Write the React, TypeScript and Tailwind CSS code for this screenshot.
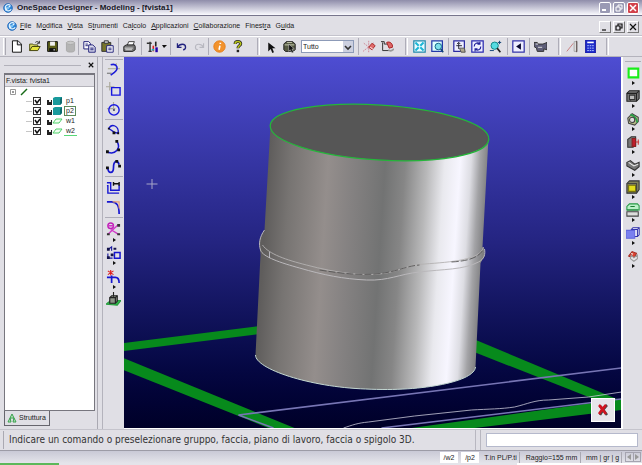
import { ReactNode, useState } from "react";

type IconProps = { children: ReactNode; size?: string };

function Icon({ children, size = "w-4 h-4" }: IconProps) {
	return (
		<svg viewBox="0 0 16 16" className={`${size} shrink-0`} fill="none" stroke="#111" strokeWidth="1.2" aria-hidden="true">
			{children}
		</svg>
	);
}

/* --Icon drawings-- */
const icons = {
	logo: (
		<>
			<circle cx="8" cy="8" r="7" fill="#2f86d8" stroke="#1c62b4" />
			<path d="M12 4a5 5 0 1 0 1 6M4 12 12 4M3 8h6" stroke="#e4f4ff" strokeWidth="1.8" />
			<circle cx="8" cy="8" r="2" fill="#7cc4f4" stroke="none" />
		</>
	),
	newFile: <path d="M3 1h7l4 4v10H3zM9 1v5h5" fill="#fff" />,
	open: (
		<>
			<path d="M2 13V5h4l1 1h5v2" fill="#d8d860" stroke="#55551a" />
			<path d="M2 13l3-5h10l-3 5z" fill="#e6e43c" stroke="#44440c" />
			<path d="M9 3c2-2 4-1 5 1M14 1v3h-3" stroke="#333" />
		</>
	),
	save: (
		<>
			<path d="M2 2h12v12H2z" fill="#5c5f18" stroke="#111" />
			<path d="M5 2h6v5H5z" fill="#f0f0f0" stroke="none" />
			<path d="M4 10h8v4H4z" fill="#111" stroke="none" />
			<path d="M10 11v2" stroke="#fff" />
		</>
	),
	database: (
		<>
			<path d="M3 3v10c0 2.500 10 2.500 10 0V3" fill="#b4b4b4" stroke="#aaa" />
			<ellipse cx="8" cy="3.500" rx="5" ry="2" fill="#c9c9c9" stroke="#aaa" />
		</>
	),
	copy: (
		<>
			<path d="M1 2h6l2 2v7H1z" fill="#fff" stroke="#22227a" />
			<path d="M7 6h5l3 3v6H7z" fill="#dde" stroke="#22227a" />
			<path d="M3 5h3M3 7h3M9 10h4M9 12h4" stroke="#22227a" />
		</>
	),
	paste: (
		<>
			<path d="M1 3h11v11H1z" fill="#77752a" stroke="#333" />
			<path d="M4 1h5v3H4z" fill="#ddd" stroke="#333" />
			<path d="M7 7h8v8H7z" fill="#fff" stroke="#22227a" />
			<path d="M9 10h4M9 12h4" stroke="#22227a" />
		</>
	),
	print: (
		<>
			<path d="M5 7l2-5h7l-2 5" fill="#fff" stroke="#444" />
			<path d="M1 8l3-2h10l1 2v4l-3 2H1z" fill="#777" stroke="#222" />
			<path d="M2 10h10M3 12h8" stroke="#ddd" />
		</>
	),
	customize: (
		<>
			<path d="M1 4h6M5 2v12M3 14h4" stroke="#333" strokeWidth="1.800" />
			<path d="M9 7v7" stroke="#d22" strokeWidth="2" />
			<path d="M12 2v6" stroke="#222" strokeWidth="2" />
			<path d="M13 9v6" stroke="#20a" strokeWidth="3" />
			<path d="M7 12h3" stroke="#1bb" strokeWidth="2" />
		</>
	),
	undo: <path d="M3 4v5h5M3 9c3-5 10-5 10 0 0 2-1 3-3 3" stroke="#23237f" strokeWidth="1.600" />,
	redo: <path d="M13 4v5H8M13 9C10 4 3 4 3 9c0 2 1 3 3 3" stroke="#b8b8c0" strokeWidth="1.400" />,
	info: (
		<>
			<circle cx="8" cy="8" r="7" fill="#f2922c" stroke="#e57f1c" />
			<path d="M8.500 7l-1 5M9 3.500v1.500" stroke="#fff" strokeWidth="2" />
		</>
	),
	help: (
		<>
			<path d="M5 5c0-4 7-4 7-.5C12 7 8.500 7 8.500 10" stroke="#222" strokeWidth="3.600" />
			<path d="M5 5c0-4 7-4 7-.5C12 7 8.500 7 8.500 10" stroke="#b8c418" strokeWidth="1.800" />
			<path d="M8.500 12v3" stroke="#222" strokeWidth="3" />
		</>
	),
	cursor: <path d="M4 3v11l3-3 2 5 2-1-2-5h4z" fill="#111" stroke="none" />,
	pickBox: (
		<>
			<path d="M1 5l3-3h8l3 3v7l-3 2H3l-2-2z" fill="#565a42" stroke="#222" />
			<path d="M2 6h12M5 3h6" stroke="#c8ccb0" />
			<path d="M7 5v9l2-2 2 4 2-1-2-4h3z" fill="#111" stroke="#fff" strokeWidth=".5" />
		</>
	),
	snap: (
		<>
			<path d="M0 14 14 3M7 1v14M1 4l12 9" stroke="#d08a98" strokeDasharray="2 1" />
			<path d="M7 9l4-5 4 3-4 5z" fill="#e26a6a" stroke="#a33" />
			<path d="M9 9l3 2" stroke="#fff" />
		</>
	),
	snapFace: (
		<>
			<path d="M0 2h4v3h4M2 3v10h8" stroke="#333" />
			<path d="M7 3c4-2 8 2 7 6l-4 1z" fill="#d66" stroke="#a22" />
			<path d="M9 12c2 2 5 1 7-1" stroke="#999" strokeWidth="2" />
		</>
	),
	fit: (
		<>
			<path d="M1 1h14v14H1z" fill="#e8fbff" stroke="#28a" strokeWidth="1.500" />
			<path d="M3 3l4 4M13 3 9 7M3 13l4-4M13 13 9 9" stroke="#1bb6d6" strokeWidth="2.400" />
		</>
	),
	zoomWindow: (
		<>
			<path d="M1 1h13v13H1z" fill="#dff" stroke="#2338a8" strokeWidth="1.500" />
			<circle cx="9" cy="8" r="4" fill="#7fe0ea" stroke="#168" />
			<path d="M12 11l3 4" stroke="#147" strokeWidth="2" />
		</>
	),
	pan: (
		<>
			<path d="M1 1h13v13H1z" fill="#eef" stroke="#2a2aa0" strokeWidth="1.500" />
			<path d="M7 3v8M4 7h7M5 5l2-2 2 2" stroke="#223" />
			<path d="M8 10h6l1 5h-5z" fill="#b0a890" stroke="#555" />
		</>
	),
	rotate: (
		<>
			<path d="M1 1h14v14H1z" fill="#eef" stroke="#2a2ab0" strokeWidth="1.500" />
			<path d="M4 8a4 4 0 0 1 7-3M12 8a4 4 0 0 1-7 3M11 2v3H8M5 14v-3h3" stroke="#23239a" strokeWidth="1.400" />
		</>
	),
	zoom: (
		<>
			<circle cx="7" cy="7" r="4.500" fill="#55dbe2" stroke="#188" />
			<path d="M10 10l4 5" stroke="#222" strokeWidth="2" />
			<path d="M13 1v4M11 3h4M1 13h5" stroke="#147" />
		</>
	),
	back: (
		<>
			<path d="M1 1h14v14H1z" fill="#eef" stroke="#3434a8" strokeWidth="1.500" />
			<path d="M11 4v8L5 8z" fill="#0a0a30" stroke="none" />
		</>
	),
	camera: (
		<>
			<path d="M0 3h4l1 2h6l5-2v9l-4-1v3H4l-1-4-3-2z" fill="#5d5d78" stroke="#333" />
			<path d="M2 5h3M5 9h5" stroke="#ddd" />
		</>
	),
	measure: (
		<>
			<path d="M1 14 9 4" stroke="#c98080" />
			<path d="M10 2h4v12h-4z" fill="#ddd" stroke="#aaa" />
			<path d="M13 1v14" stroke="#655" />
		</>
	),
	calculator: (
		<>
			<path d="M2 0h12v16H2z" fill="#1d2ccc" stroke="#1818a0" />
			<path d="M4 3h8" stroke="#fff" strokeWidth="2" />
			<path d="M4 7h8M4 10h8M4 13h8" stroke="#b8c8ff" strokeDasharray="2 1" />
		</>
	),
	/* --Drafting icons-- */
	tangent: (
		<>
			<path d="M2 7h8M11 1v6M9 7h6" stroke="#b5b5a4" />
			<path d="M5 3c7-2 9 4 4 8l-4 3" stroke="#1a1ad8" strokeWidth="1.600" />
			<path d="M1 12h5" stroke="#777" />
		</>
	),
	rectangle: (
		<>
			<path d="M4 0v9M0 5h9" stroke="#aaa99a" />
			<path d="M6 6h9v8H6z" stroke="#1616e0" strokeWidth="1.500" />
		</>
	),
	circle: (
		<>
			<path d="M8 0v9M1 7h9" stroke="#aaa99a" />
			<circle cx="8.500" cy="8.500" r="5.500" stroke="#1616e0" strokeWidth="1.500" />
			<circle cx="8.500" cy="8.500" r="1" fill="#336" stroke="none" />
		</>
	),
	arcCenter: (
		<>
			<path d="M3 7c3-6 11-3 10 5M3 7l6 4 4 1" stroke="#1616d0" strokeWidth="1.400" />
			<path d="M2 6h2v2H2zM7 10h3v3H7zM12 11h2v2h-2z" fill="#111" stroke="none" />
		</>
	),
	arc: (
		<>
			<path d="M12 2c4 7-2 14-10 11" stroke="#1616d0" strokeWidth="1.600" />
			<path d="M10 0h3v3h-3zM0 11h3v3H0zM12 9h3v3h-3z" fill="#111" stroke="none" />
		</>
	),
	spline: (
		<>
			<path d="M2 9c0 7 6 7 6 0s4-9 6-3" stroke="#1616d0" strokeWidth="1.800" />
			<path d="M0 8h3v3H0zM10 1h3v3h-3zM13 6h3v3h-3z" fill="#111" stroke="none" />
		</>
	),
	offset: (
		<>
			<path d="M1 3h4v8h9V5M1 6h1v8h12" stroke="#1616d0" strokeWidth="1.500" />
			<path d="M8 2v4M8 4h6M14 2v4" stroke="#111" strokeWidth="1.500" />
		</>
	),
	fillet: (
		<>
			<path d="M1 2h5c6 0 8 4 8 13" stroke="#1616d0" strokeWidth="1.800" />
			<path d="M7 2h7v7" stroke="#e8a070" />
		</>
	),
	trim: (
		<>
			<circle cx="5" cy="4" r="3" stroke="#c020b8" strokeWidth="1.500" />
			<path d="M2 13 13 3M5 8l8 5M2 4h6" stroke="#d038c8" strokeWidth="1.500" />
			<path d="M12 2h3v3h-3zM12 12h3v2h-3zM1 12h3v2H1z" fill="#333" stroke="none" />
		</>
	),
	move: (
		<>
			<path d="M2 5l4-3v4M2 9v5h5" stroke="#1616a0" />
			<path d="M9 8h6v6H9z" stroke="#1616d0" strokeWidth="1.600" />
			<path d="M1 3h3v3H1zM5 9h3v3H5zM1 12h3v3H1zM8 3h3v2H8z" fill="#14144a" stroke="none" />
		</>
	),
	split: (
		<>
			<path d="M2 2l6 4M8 2 2 6M5 1v6" stroke="#e02020" />
			<path d="M1 9h9c3 0 4 2 4 6M6 7v8" stroke="#1616d0" strokeWidth="1.800" />
		</>
	),
	plane: (
		<>
			<path d="M0 13l5-4h11l-4 5z" fill="#2db84a" stroke="#2a9c40" />
			<path d="M4 6l2-2h6v6l-2 2H4z" fill="#8d9488" stroke="#222" />
			<path d="M4 6h6v6M10 6l2-2M8 0v5" stroke="#222" />
		</>
	),
	/* --Solid icons-- */
	workplane: <path d="M3 3h11v10H3z" fill="#fff" stroke="#18ee18" strokeWidth="2.400" />,
	extrude: (
		<>
			<path d="M1 5l3-3h11v9l-3 3H1z" fill="#777" stroke="#222" />
			<path d="M1 5h11v9M12 5l3-3M5 13V8h4" stroke="#222" />
			<path d="M4 7h6v5H4z" fill="#bbb" stroke="#333" />
		</>
	),
	revolve: (
		<>
			<path d="M2 7l5-5 7 4v5l-4 4-7-2z" fill="#b8bc88" stroke="#444" />
			<path d="M5 3c4 1 7 4 8 9" stroke="#28a048" strokeWidth="2" />
			<circle cx="7" cy="9" r="3" fill="#ddd" stroke="#444" />
		</>
	),
	section: (
		<>
			<path d="M2 5l4-3h5v10l-3 2H2z" fill="#777" stroke="#333" />
			<path d="M7 4h4v9H7z" fill="#c01c2c" stroke="#822" />
			<path d="M11 8h4M14 5v6" stroke="#c33" />
		</>
	),
	sweep: (
		<>
			<path d="M1 5l4-2 5 4 5-2v5l-5 4-9-5z" fill="#777" stroke="#333" />
			<path d="M3 5l6 4 5-2" stroke="#eee" />
		</>
	),
	pocket: (
		<>
			<path d="M1 4l3-3h11v10l-3 4H1z" fill="#83835c" stroke="#333" />
			<path d="M3 6h8v7H3z" fill="#e2dc1c" stroke="#77720c" />
			<path d="M1 4h11v11" stroke="#444" />
		</>
	),
	table: (
		<>
			<path d="M1 8V4l3-3h9l2 2v5z" fill="#baf0c8" stroke="#259a44" />
			<path d="M1 10h13v5H1z" fill="#ddd" stroke="#444" />
			<path d="M1 8h13M5 4h5" stroke="#1c7c34" />
		</>
	),
	shell: (
		<>
			<path d="M6 4l2-2h7v8l-2 2H6z" fill="#fff" stroke="#2b2ba8" />
			<path d="M6 4h7v8M13 4l2-2" stroke="#2b2ba8" />
			<path d="M0 5h10v9H0z" fill="#7a80f0" stroke="#6065dc" />
		</>
	),
	modify: (
		<>
			<path d="M3 8l4-5 5 2-3 6z" fill="#dc4330" stroke="#a22c22" />
			<path d="M6 7l3 3 4-3v4l-4 3-4-3z" fill="#e8e8e8" stroke="#999" />
			<path d="M6 5l2 1" stroke="#fff" />
		</>
	),
};

type IconName = keyof typeof icons;

type ToolGroupType = { width: string; tools: { name: IconName; label: string; menu?: boolean }[]; select?: boolean; last?: boolean };

const toolGroups: ToolGroupType[] = [
	{
		width: "w-[73px]",
		tools: [
			{ name: "newFile", label: "Nuovo" },
			{ name: "open", label: "Apri" },
			{ name: "save", label: "Salva" },
			{ name: "database", label: "Database" },
		],
	},
	{
		width: "w-[40px]",
		tools: [
			{ name: "copy", label: "Copia" },
			{ name: "paste", label: "Incolla" },
		],
	},
	{ width: "w-[23px]", tools: [{ name: "print", label: "Stampa" }] },
	{ width: "w-[29px]", tools: [{ name: "customize", label: "Personalizza", menu: true }] },
	{
		width: "w-[38px]",
		tools: [
			{ name: "undo", label: "Annulla" },
			{ name: "redo", label: "Ripeti" },
		],
	},
	{
		width: "w-[49px]",
		last: true,
		tools: [
			{ name: "info", label: "Informazioni" },
			{ name: "help", label: "Aiuto" },
		],
	},
	{
		width: "w-[98px]",
		select: true,
		tools: [
			{ name: "cursor", label: "Seleziona" },
			{ name: "pickBox", label: "Seleziona in 3D" },
		],
	},
	{
		width: "w-[47px]",
		last: true,
		tools: [
			{ name: "snap", label: "Aggancia" },
			{ name: "snapFace", label: "Aggancia faccia" },
		],
	},
	{
		width: "w-[40px]",
		tools: [
			{ name: "fit", label: "Adatta" },
			{ name: "zoomWindow", label: "Zoom finestra" },
		],
	},
	{
		width: "w-[59px]",
		tools: [
			{ name: "pan", label: "Sposta vista" },
			{ name: "rotate", label: "Ruota vista" },
			{ name: "zoom", label: "Zoom" },
		],
	},
	{ width: "w-[22px]", tools: [{ name: "back", label: "Vista precedente" }] },
	{ width: "w-[29px]", last: true, tools: [{ name: "camera", label: "Camera" }] },
	{
		width: "w-[45px]",
		last: true,
		tools: [
			{ name: "measure", label: "Misura" },
			{ name: "calculator", label: "Calcolatrice" },
		],
	},
];

const menus = [
	["", "F", "ile"],
	["M", "o", "difica"],
	["", "V", "ista"],
	["S", "t", "rumenti"],
	["Ca", "l", "colo"],
	["", "A", "pplicazioni"],
	["", "C", "ollaborazione"],
	["Finest", "r", "a"],
	["G", "u", "ida"],
];

const draftTools: { height: string; names: IconName[] }[] = [
	{ height: "h-[60px]", names: ["tangent", "rectangle", "circle"] },
	{ height: "h-[57px]", names: ["arcCenter", "arc", "spline"] },
	{ height: "h-[41px]", names: ["offset", "fillet"] },
];
const editTools: IconName[] = ["trim", "move", "split", "plane"];
const solidTools: IconName[] = ["workplane", "extrude", "revolve", "section", "sweep", "pocket", "table", "shell", "modify"];

const parts = [
	{ name: "p1", solid: true },
	{ name: "p2", solid: true },
	{ name: "w1", solid: false },
	{ name: "w2", solid: false },
];

function TitleBar() {
	return (
		<header className="flex h-4 shrink-0 items-center border-b border-[#77758c] bg-linear-to-b from-[#8f8daa] via-[#c4c3d4] to-[#fbfbff] pl-[3px] pr-[3px]">
			<Icon size="w-[10px] h-[10px]">{icons.logo}</Icon>
			<h1 className="ml-1 flex-1 whitespace-nowrap text-[8px] font-bold text-[#15151f]">OneSpace Designer - Modeling - [fvista1]</h1>
			<div className="flex gap-[2px]">
				<button aria-label="Riduci" className="flex h-3 w-3 items-end rounded-xs border border-white bg-[#9a9ab4] p-[2px]">
					<span className="h-[2px] w-1 bg-white"></span>
				</button>
				<button aria-label="Ripristina" className="flex h-3 w-3 items-center justify-center rounded-xs border border-white bg-[#9a9ab4]">
					<svg viewBox="0 0 8 8" className="h-2 w-2" fill="none" stroke="#fff">
						<path d="M3 3V1h4v4H5M1 3h4v4H1z" />
					</svg>
				</button>
				<button aria-label="Chiudi" className="flex h-3 w-3 items-center justify-center rounded-xs border border-white bg-[#d2414b]">
					<svg viewBox="0 0 8 8" className="h-2 w-2" stroke="#fff" strokeWidth="1.500">
						<path d="M1 1l6 6M7 1 1 7" />
					</svg>
				</button>
			</div>
		</header>
	);
}

function MenuBar() {
	const mdi = [
		{ label: "Riduci vista", d: "M1 7h4" },
		{ label: "Ripristina vista", d: "M3 3V1h4v4H5M1 3h4v4H1z" },
		{ label: "Chiudi vista", d: "M1 1l6 6M7 1 1 7" },
	];
	return (
		<nav className="flex h-5 shrink-0 items-center border-b border-[#c4c3cc] pl-[7px] pr-[3px]">
			<Icon size="w-[10px] h-[10px]">{icons.logo}</Icon>
			<div className="ml-[3px] flex flex-1 gap-[5px] whitespace-nowrap">
				{menus.map(([before, key, after]) => (
					<button key={before + key + after}>
						{before}
						<u>{key}</u>
						{after}
					</button>
				))}
			</div>
			<div className="flex gap-[2px] pt-[2px]">
				{mdi.map(({ label, d }) => (
					<button key={label} aria-label={label} className="flex h-3 w-3 items-center justify-center border border-t-white border-r-[#777] border-b-[#777] border-l-white">
						<svg viewBox="0 0 8 8" className="h-2 w-2" fill="none" stroke="#111" strokeWidth="1.200">
							<path d={d} />
						</svg>
					</button>
				))}
			</div>
		</nav>
	);
}

function FilterSelect() {
	return (
		<div className="relative h-[13px] w-[53px]">
			<select aria-label="Filtro di selezione" className="block h-full w-full appearance-none border border-[#8d9bb8] bg-white pl-px">
				<option>Tutto</option>
			</select>
			<span className="pointer-events-none absolute top-px right-px flex h-[11px] w-[10px] items-center justify-center bg-[#ccd0e0]">
				<svg viewBox="0 0 8 8" className="h-2 w-2" fill="none" stroke="#333" strokeWidth="1.600">
					<path d="M1 3l3 3 3-3" />
				</svg>
			</span>
		</div>
	);
}

function ToolBar() {
	return (
		<div role="toolbar" className="flex h-[21px] shrink-0 items-center border-t border-t-white border-b border-b-[#b4b3bc] pl-[3px]">
			<div className="h-[17px] w-[3px] border-x border-l-white border-r-[#aaa9b2]"></div>
			{toolGroups.map(({ width, tools, select, last }) => (
				<div key={tools[0].name} className="flex items-center">
					<div className={`${width} flex h-[17px] items-center gap-[5px] border-r border-[#aeadb8] pl-1`}>
						{tools.map(({ name, label, menu }) => (
							<button key={name} aria-label={label} className="flex items-center">
								<Icon size="w-[13px] h-[13px]">{icons[name]}</Icon>
								{menu && <Arrow />}
							</button>
						))}
						{select && <FilterSelect />}
					</div>
					{last && <div className="mx-px h-[17px] w-px bg-white"></div>}
				</div>
			))}
		</div>
	);
}

function Arrow() {
	return (
		<svg viewBox="0 0 6 4" className="ml-[2px] h-1 w-[6px]">
			<path d="M1 0h5L3 3z" fill="#111" />
		</svg>
	);
}

function Dot() {
	return (
		<svg viewBox="0 0 4 4" className="mt-px h-1 w-1">
			<path d="M1 0v4l3-2z" fill="#111" />
		</svg>
	);
}

function PartRow({ name, solid }: { name: string; solid: boolean }) {
	const [visible, setVisible] = useState(true);
	return (
		<li className="flex h-[10px] items-center pl-5">
			<span className="mr-px h-px w-[6px] bg-[#c6c6c6]"></span>
			<span className="relative h-2 w-2">
				<input id={name} type="checkbox" checked={visible} onChange={e => setVisible(e.target.checked)} className="peer absolute inset-0 appearance-none border border-[#333] bg-white" />
				<svg viewBox="0 0 8 8" className="pointer-events-none invisible absolute inset-0 h-2 w-2 peer-checked:visible" fill="none" stroke="#111" strokeWidth="1.500">
					<path d="M2 3l2 3 3-4" />
				</svg>
			</span>
			<svg viewBox="0 0 18 10" className="ml-[5px] h-[10px] w-[18px] shrink-0">
				<path d="M1 4h5v5H1z" fill="#222" />
				<path d="M3 4h2v2H3z" fill="#eee" />
				{solid ? (
					<>
						<path d="M7 2l2-1h7v6l-2 2H7z" fill="#199a9c" />
						<path d="M14 3v6l2-2V1z" fill="#0d6c70" />
					</>
				) : (
					<path d="M7 7l3-4h6l-3 4z" fill="#effff0" stroke="#4fd06a" />
				)}
			</svg>
			<label htmlFor={name} className={name === "p2" ? "h-[10px] border border-[#5c8a5c] px-px leading-[8px]" : name === "w2" ? "border-b border-[#58d878] px-[2px] leading-[9px]" : "px-[2px]"}>
				{name}
			</label>
		</li>
	);
}

function StructurePanel() {
	return (
		<aside className="flex w-[98px] shrink-0 flex-col border-r border-[#aaa9b2] pl-1 pr-[2px]">
			<div className="flex h-4 items-center gap-[7px]">
				<div className="h-px flex-1 bg-[#b2b1ba]"></div>
				<button aria-label="Chiudi pannello">
					<svg viewBox="0 0 8 8" className="mr-px h-[6px] w-[6px]" stroke="#111" strokeWidth="1.500">
						<path d="M1 1l6 6M7 1 1 7" />
					</svg>
				</button>
			</div>
			<div className="flex flex-1 flex-col border border-t-2 border-[#77767e] bg-white">
				<div className="h-3 border-b border-[#b4b3ba] bg-[#e0dfe5] pl-px leading-3">F.vista: fvista1</div>
				<div className="mt-px flex h-2 items-center pl-[5px]">
					<svg viewBox="0 0 20 8" className="h-2 w-5" fill="none">
						<path d="M.5 1.500h5v5h-5z" stroke="#999" />
						<path d="M2 4h2" stroke="#333" />
						<path d="M11 7l6-6" stroke="#176a17" strokeWidth="1.400" />
					</svg>
				</div>
				<ul className="ml-px flex flex-col">
					{parts.map(part => (
						<PartRow key={part.name} {...part} />
					))}
				</ul>
			</div>
			<button className="mb-[3px] flex h-[15px] w-[46px] items-center gap-[2px] border border-t-0 border-[#66656d] pl-[2px]">
				<svg viewBox="0 0 10 10" className="h-[10px] w-[10px]" fill="#bfe8c4" stroke="#38a04c">
					<path d="M5 1 3 5h4zM3 5 1 9h3zM7 5 6 9h3z" />
				</svg>
				Struttura
			</button>
		</aside>
	);
}

function DraftBar() {
	return (
		<div role="toolbar" className="ml-1 flex w-[22px] shrink-0 flex-col items-center border-l border-[#b4b3bc] pt-[2px]">
			{draftTools.map(({ height, names }) => (
				<div key={names[0]} className={`${height} flex w-[18px] flex-col items-center justify-around border-t border-[#aeadb8]`}>
					{names.map(name => (
						<button key={name} aria-label={name}>
							<Icon size="w-[15px] h-[15px]">{icons[name]}</Icon>
						</button>
					))}
				</div>
			))}
			<div className="flex h-[90px] w-[18px] flex-col items-center justify-between border-t border-[#aeadb8] pt-1">
				{editTools.map(name => (
					<button key={name} aria-label={name} className="flex flex-col items-center">
						<Icon size="w-[15px] h-[15px]">{icons[name]}</Icon>
						{name !== "plane" && <Dot />}
					</button>
				))}
			</div>
		</div>
	);
}

function Scene() {
	return (
		<svg viewBox="124 57 498 371" preserveAspectRatio="xMidYMid slice" className="absolute inset-0 h-full w-full" fill="none">
			<defs>
				<linearGradient id="steel" gradientUnits="userSpaceOnUse" x1="258" y1="340" x2="477" y2="354">
					<stop offset="0" stopColor="#5f5d5c" />
					<stop offset=".1" stopColor="#777472" />
					<stop offset=".27" stopColor="#948e8c" />
					<stop offset=".38" stopColor="#858282" />
					<stop offset=".53" stopColor="#727373" />
					<stop offset=".62" stopColor="#868686" />
					<stop offset=".72" stopColor="#b8b8b9" />
					<stop offset=".8" stopColor="#e9e9ee" />
					<stop offset=".87" stopColor="#f7f6ff" />
					<stop offset=".92" stopColor="#dddde3" />
					<stop offset=".96" stopColor="#a3a3a6" />
					<stop offset="1" stopColor="#7e7e80" />
				</linearGradient>
			</defs>
			{/* ground frame */}
			<g fill="#078a1c">
				<path d="M124 343l136-17v8l-136 17z" />
				<path d="M124 358l171 70h-26l-145-58z" />
				<path d="M474 339l148 62v9l-150-59z" />
				<path d="M412 428l210-29v11l-147 18z" />
			</g>
			<path d="M274 428l-35-13 383-47M382 428l240-29" stroke="#7775b4" strokeWidth="1.600" />
			<path d="M344 428c9-3 14-5 25-6l46-6 57-6c17-1 30-1 43-3 13-3 20-7 34-7l40-3 33-5" stroke="#c8c8d8" strokeWidth=".8" />
			{/* can body */}
			<path d="M271 126l-6 104c-3 5-5 9-5 13l1 12-5 100c0 14 54 32 110 34 60 3 109-8 110-22l5-104 4-7 0-7-2-2 6-109z" fill="url(#steel)" />
			<path d="M256 355c0 14 54 32 110 34 60 3 109-8 110-22" stroke="#c4d8d2" />
			<ellipse cx="380" cy="132.500" rx="109.500" ry="27.500" transform="rotate(3.6 380 132.500)" fill="#565656" stroke="#24b63a" strokeWidth="1.300" />
			{/* seam */}
			<path d="M265 230c-5 7-6 14-4 20 2 7 21 13 39 18 24 7 44 11 67 12 22 1 33-6 53-8 24-3 44-2 59-10 6-3 7-8 6-13" stroke="#bab8bb" />
			<path d="M263 245c6 9 24 15 44 20 30 8 60 12 80 8 18-4 22-8 38-9 27-2 56-4 59-17" stroke="#b3b1b1" strokeWidth=".9" />
			<path d="M320 270c25 4 48 6 65 3s22-7 35-8M452 262c18-1 28-5 32-13" stroke="#4d4b4b" strokeWidth=".8" strokeDasharray="7 2" />
			<path d="M270 252v6" stroke="#c8c8d0" strokeWidth=".8" />
			{/* cursor */}
			<path d="M147 184h11M152.500 179v10" stroke="#a7a6c8" />
		</svg>
	);
}

function SolidBar() {
	return (
		<div role="toolbar" className="flex w-5 shrink-0 flex-col items-center border-l border-white pt-1">
			<div className="mb-1 h-px w-4 bg-[#b0afb8]"></div>
			<div className="flex h-[202px] flex-col items-center justify-between">
				{solidTools.map(name => (
					<button key={name} aria-label={name} className="flex flex-col items-center">
						<Icon size="w-[14px] h-[14px]">{icons[name]}</Icon>
						<Dot />
					</button>
				))}
			</div>
		</div>
	);
}

function CommandBar() {
	return (
		<div className="flex h-[22px] shrink-0 items-center border-y border-t-[#c5c4cc] border-b-[#9c9ba6] pr-1">
			<label htmlFor="command" className="ml-[3px] flex-1 overflow-hidden border-l border-[#aaa9b2] pl-[5px] font-['DejaVu_Sans_Condensed','DejaVu_Sans',sans-serif] text-[10px] leading-[18px] whitespace-nowrap text-[#333]">
				Indicare un comando o preselezionare gruppo, faccia, piano di lavoro, faccia o spigolo 3D.
			</label>
			<div className="mr-[5px] h-full w-[6px] border-x border-[#b8b7c0]"></div>
			<input id="command" type="text" className="h-[14px] w-[152px] border border-[#b5b9cc] bg-white px-1 outline-none" />
		</div>
	);
}

function StatusBar() {
	return (
		<footer className="flex h-3 shrink-0 items-center justify-end gap-[3px] bg-linear-to-b from-[#c9c9d6] to-[#e4e4ea] pr-px whitespace-nowrap">
			<span className="w-[18px] bg-white text-center leading-[11px]">/w2</span>
			<span className="w-[18px] bg-white text-center leading-[11px]">/p2</span>
			<span className="w-[38px] border-r border-[#aaa9b2] text-center leading-[11px]">T.in PL/P.ti</span>
			<span className="w-[58px] border-r border-[#aaa9b2] text-center leading-[11px]">Raggio=155 mm</span>
			<span className="w-[38px] border-r border-[#aaa9b2] text-center leading-[11px]">mm | gr | g</span>
			<span className="flex h-[10px] w-4 border border-[#a5a4b0]">
				<button aria-label="Indietro" className="flex flex-1 items-center justify-center border-r border-[#a5a4b0]">
					<svg viewBox="0 0 4 6" className="h-[6px] w-1" fill="#999">
						<path d="M4 0v6L0 3z" />
					</svg>
				</button>
				<button aria-label="Avanti" className="flex flex-1 items-center justify-center">
					<svg viewBox="0 0 4 6" className="h-[6px] w-1" fill="#999">
						<path d="M0 0v6l4-3z" />
					</svg>
				</button>
			</span>
		</footer>
	);
}

function App() {
	return (
		<div className="flex h-screen flex-col overflow-hidden bg-[#e0dfe5] font-['Liberation_Sans',sans-serif] text-[7px] leading-[10px] text-[#1a1a1a]">
			<TitleBar />
			<MenuBar />
			<ToolBar />
			<main className="flex min-h-0 flex-1">
				<StructurePanel />
				<DraftBar />
				<section className="relative min-w-0 flex-1 overflow-hidden border-r border-b border-white bg-linear-to-b from-[#4e4dd2] via-[#242481] to-[#000028]">
					<Scene />
					<button aria-label="Annulla comando" className="absolute right-[6px] bottom-[6px] flex h-6 w-6 items-center justify-center border border-white bg-[#e6e5ea]">
						<svg viewBox="0 0 12 12" className="h-3 w-3" fill="none">
							<path d="M3 2c2 2 4 5 7 9M10 1C7 4 5 7 3 11" stroke="#444" strokeWidth="2.500" />
							<path d="M2 1c2 2 4 5 7 9M9 1C6 4 4 7 2 10" stroke="#d01420" strokeWidth="2.600" />
						</svg>
					</button>
				</section>
				<SolidBar />
			</main>
			<CommandBar />
			<StatusBar />
			<div className="flex h-[2px] shrink-0 bg-white">
				<div className="w-[59px] bg-[#5cb85a]"></div>
				<div className="flex-1 bg-[#e4e4ea]"></div>
				<div className="w-[125px] bg-white"></div>
			</div>
		</div>
	);
}

export default App;
